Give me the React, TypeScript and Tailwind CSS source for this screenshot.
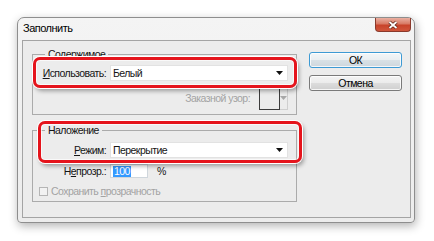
const okBtn =
  "h-[16px] w-[93px] rounded-[3px] border border-[#3d9ad4] bg-[linear-gradient(to_bottom,#f3f6f8_0%,#e9eef1_50%,#d9e1e6_50%,#ced7dd_100%)] shadow-[inset_0_0_0_1px_rgba(255,255,255,0.8)] text-center leading-[14px] text-black";
const cancelBtn =
  "h-[16px] w-[93px] rounded-[3px] border border-[#7a7a7a] bg-[linear-gradient(to_bottom,#f4f4f4_0%,#ebebeb_50%,#dddddd_50%,#cfcfcf_100%)] shadow-[inset_0_0_0_1px_rgba(255,255,255,0.8)] text-center leading-[14px] text-black";
const redBox =
  "pointer-events-none absolute rounded-[7px] border-[3px] border-[#e5141c] shadow-[inset_0_0_0_1px_rgba(255,255,255,0.7),0_0_0_1px_#ffffff,2px_3px_4px_rgba(0,0,0,0.35)]";

function Arrow({ color = "#111" }: { color?: string }) {
  return (
    <svg width="7" height="4" viewBox="0 0 7 4">
      <path d="M0 0 H7 L3.5 4 Z" fill={color} />
    </svg>
  );
}

function Select({ value }: { value: string }) {
  return (
    <div className="ml-[4px] flex h-[16px] w-[178px] items-center justify-between border border-[#e2e2e2] bg-white pl-[2px] pr-[4px]">
      <span>{value}</span>
      <Arrow />
    </div>
  );
}

export default function App() {
  return (
    <div className="relative h-[241px] w-[434px] bg-white pl-[17px] pt-[17px] font-['Liberation_Sans',Arial,sans-serif] text-[10.5px] leading-[12px] tracking-[-0.55px] text-[#151515]">
      <div className="flex h-[206px] w-[398px] flex-col rounded-t-[7px] rounded-b-[4px] border border-[#8e8e8e] bg-gradient-to-b from-[#f4f4f4] to-[#ececec] pb-[4px] pl-[4px] pr-[3px] shadow-[1px_3px_10px_rgba(0,0,0,0.3)]">
        {/* title bar */}
        <div className="flex h-[22px] items-start justify-between">
          <span className="pl-[1px] pt-[4px] text-[11px] leading-[13px] tracking-[-0.5px] text-black">Заполнить</span>
          <div className="flex h-[14px] w-[36px] items-center justify-center rounded-b-[4px] border border-t-0 border-[#8a3a2c] bg-[linear-gradient(to_bottom,#eab0a2_0%,#d87a64_45%,#c8432a_55%,#d0563c_100%)]">
            <svg width="12" height="10" viewBox="0 0 12 10">
              <path d="M2.5 2 L9.5 8 M9.5 2 L2.5 8" stroke="#5c2418" strokeWidth="3.4" />
              <path d="M2.5 2 L9.5 8 M9.5 2 L2.5 8" stroke="#ffffff" strokeWidth="1.8" />
            </svg>
          </div>
        </div>

        {/* client area */}
        <div className="flex flex-1 border border-[#a4a4a4] bg-[#ececec]">
          <div className="flex flex-col pl-[9px] pt-[7px]">
            <fieldset className="w-[265px] border border-[#ababab] pb-[4px] pt-[5px]">
              <legend className="ml-[12px] px-[3px] leading-[12px]">Содержимое</legend>
              <div className="flex h-[16px] items-center">
                <span className="w-[73px] text-right">
                  <span className="underline">И</span>спользовать:
                </span>
                <Select value="Белый" />
              </div>
              <div className="mt-[5px] flex items-center justify-end pr-[8px]">
                <span className="text-[#a3a3a3]">Заказной узор:</span>
                <div className="ml-[9px] flex h-[24px] w-[29px]">
                  <div className="w-[21px] border border-[#3c3c3c]" />
                  <div className="flex w-[8px] items-center justify-center border border-l-0 border-[#cfcfcf]">
                    <Arrow color="#a8a8a8" />
                  </div>
                </div>
              </div>
            </fieldset>

            <fieldset className="mt-[9px] w-[265px] border border-[#ababab] pb-[5px] pt-[6px]">
              <legend className="ml-[12px] px-[3px] leading-[12px]">Наложение</legend>
              <div className="flex h-[16px] items-center">
                <span className="w-[73px] text-right">
                  <span className="underline">Р</span>ежим:
                </span>
                <Select value="Перекрытие" />
              </div>
              <div className="mt-[6px] flex h-[14px] items-center">
                <span className="w-[73px] text-right">
                  Н<span className="underline">е</span>прозр.:
                </span>
                <div className="ml-[4px] flex h-[14px] w-[38px] items-center border border-[#cfd6dc] bg-white pl-[2px]">
                  <span className="bg-[#3399ff] px-[1px] leading-[11px] text-white">100</span>
                </div>
                <span className="ml-[9px]">%</span>
              </div>
              <div className="mt-[8px] flex h-[10px] items-center pl-[6px]">
                <div className="h-[9px] w-[9px] border border-[#b5b5b5] bg-[#f2f2f2]" />
                <span className="ml-[3px] text-[#a3a3a3]">
                  Сохранить <span className="underline">п</span>розрачность
                </span>
              </div>
            </fieldset>
          </div>

          <div className="ml-[12px] flex flex-col gap-[7px] pt-[11px]">
            <div className={okBtn}>ОК</div>
            <div className={cancelBtn}>Отмена</div>
          </div>
        </div>
      </div>

      {/* highlight marks */}
      <div className={`${redBox} left-[33px] top-[57px] h-[31px] w-[264px]`} />
      <div className={`${redBox} left-[38px] top-[121px] h-[42px] w-[264px]`} />
    </div>
  );
}
